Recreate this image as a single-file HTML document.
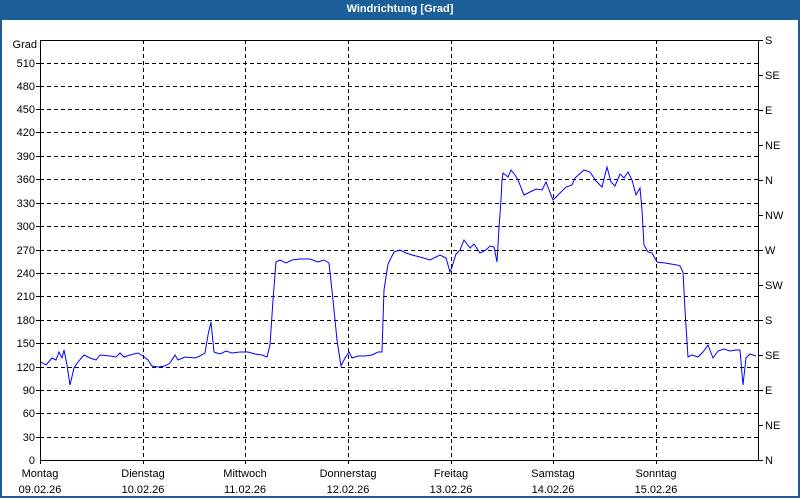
<!DOCTYPE html>
<html><head><meta charset="utf-8"><style>
body{margin:0;width:800px;height:500px;background:#fff;overflow:hidden;font-family:"Liberation Sans",sans-serif;}
#w{position:absolute;left:0;top:0;width:796px;height:496px;border:2px solid #1c5f98;border-top:none;}
#t{position:absolute;left:0;top:0;width:800px;height:20px;background:#1c5f98;color:#fff;font-weight:bold;font-size:11px;text-align:center;line-height:18px;}
svg{position:absolute;left:0;top:0}
text{font-family:"Liberation Sans",sans-serif;font-size:11px;fill:#000}
</style></head><body>
<div id="w"></div>
<div id="t">Windrichtung [Grad]</div>
<svg width="800" height="500">
<g stroke="#000" stroke-dasharray="4,3" stroke-width="1">
<line x1="40" x2="758" y1="63.5" y2="63.5"/><line x1="40" x2="758" y1="86.5" y2="86.5"/><line x1="40" x2="758" y1="109.5" y2="109.5"/><line x1="40" x2="758" y1="132.5" y2="132.5"/><line x1="40" x2="758" y1="156.5" y2="156.5"/><line x1="40" x2="758" y1="179.5" y2="179.5"/><line x1="40" x2="758" y1="203.5" y2="203.5"/><line x1="40" x2="758" y1="226.5" y2="226.5"/><line x1="40" x2="758" y1="250.5" y2="250.5"/><line x1="40" x2="758" y1="273.5" y2="273.5"/><line x1="40" x2="758" y1="296.5" y2="296.5"/><line x1="40" x2="758" y1="320.5" y2="320.5"/><line x1="40" x2="758" y1="343.5" y2="343.5"/><line x1="40" x2="758" y1="367.5" y2="367.5"/><line x1="40" x2="758" y1="390.5" y2="390.5"/><line x1="40" x2="758" y1="413.5" y2="413.5"/><line x1="40" x2="758" y1="437.5" y2="437.5"/>
<line x1="143.5" x2="143.5" y1="40" y2="460"/><line x1="245.5" x2="245.5" y1="40" y2="460"/><line x1="348.5" x2="348.5" y1="40" y2="460"/><line x1="451.5" x2="451.5" y1="40" y2="460"/><line x1="553.5" x2="553.5" y1="40" y2="460"/><line x1="656.5" x2="656.5" y1="40" y2="460"/>
</g>
<rect x="40.5" y="40.5" width="718" height="420" fill="none" stroke="#000"/>
<g stroke="#000"><line x1="36" x2="40" y1="63.5" y2="63.5"/><line x1="36" x2="40" y1="86.5" y2="86.5"/><line x1="36" x2="40" y1="109.5" y2="109.5"/><line x1="36" x2="40" y1="132.5" y2="132.5"/><line x1="36" x2="40" y1="156.5" y2="156.5"/><line x1="36" x2="40" y1="179.5" y2="179.5"/><line x1="36" x2="40" y1="203.5" y2="203.5"/><line x1="36" x2="40" y1="226.5" y2="226.5"/><line x1="36" x2="40" y1="250.5" y2="250.5"/><line x1="36" x2="40" y1="273.5" y2="273.5"/><line x1="36" x2="40" y1="296.5" y2="296.5"/><line x1="36" x2="40" y1="320.5" y2="320.5"/><line x1="36" x2="40" y1="343.5" y2="343.5"/><line x1="36" x2="40" y1="367.5" y2="367.5"/><line x1="36" x2="40" y1="390.5" y2="390.5"/><line x1="36" x2="40" y1="413.5" y2="413.5"/><line x1="36" x2="40" y1="437.5" y2="437.5"/>
<line x1="758" x2="763" y1="40.5" y2="40.5"/><line x1="758" x2="763" y1="75.5" y2="75.5"/><line x1="758" x2="763" y1="110.5" y2="110.5"/><line x1="758" x2="763" y1="145.5" y2="145.5"/><line x1="758" x2="763" y1="180.5" y2="180.5"/><line x1="758" x2="763" y1="215.5" y2="215.5"/><line x1="758" x2="763" y1="250.5" y2="250.5"/><line x1="758" x2="763" y1="285.5" y2="285.5"/><line x1="758" x2="763" y1="320.5" y2="320.5"/><line x1="758" x2="763" y1="355.5" y2="355.5"/><line x1="758" x2="763" y1="390.5" y2="390.5"/><line x1="758" x2="763" y1="425.5" y2="425.5"/><line x1="758" x2="763" y1="460.5" y2="460.5"/>
<line x1="40.5" x2="40.5" y1="460" y2="464"/><line x1="143.5" x2="143.5" y1="460" y2="464"/><line x1="245.5" x2="245.5" y1="460" y2="464"/><line x1="348.5" x2="348.5" y1="460" y2="464"/><line x1="451.5" x2="451.5" y1="460" y2="464"/><line x1="553.5" x2="553.5" y1="460" y2="464"/><line x1="656.5" x2="656.5" y1="460" y2="464"/></g>
<g text-anchor="end"><text x="37" y="48">Grad</text><text x="35" y="67">510</text><text x="35" y="90">480</text><text x="35" y="113">450</text><text x="35" y="136">420</text><text x="35" y="160">390</text><text x="35" y="183">360</text><text x="35" y="207">330</text><text x="35" y="230">300</text><text x="35" y="254">270</text><text x="35" y="277">240</text><text x="35" y="300">210</text><text x="35" y="324">180</text><text x="35" y="347">150</text><text x="35" y="371">120</text><text x="35" y="394">90</text><text x="35" y="417">60</text><text x="35" y="441">30</text><text x="35" y="464">0</text></g>
<g><text x="765" y="44">S</text><text x="765" y="79">SE</text><text x="765" y="114">E</text><text x="765" y="149">NE</text><text x="765" y="184">N</text><text x="765" y="219">NW</text><text x="765" y="254">W</text><text x="765" y="289">SW</text><text x="765" y="324">S</text><text x="765" y="359">SE</text><text x="765" y="394">E</text><text x="765" y="429">NE</text><text x="765" y="464">N</text></g>
<g text-anchor="middle"><text x="40" y="477">Montag</text><text x="40" y="493">09.02.26</text><text x="143" y="477">Dienstag</text><text x="143" y="493">10.02.26</text><text x="245" y="477">Mittwoch</text><text x="245" y="493">11.02.26</text><text x="348" y="477">Donnerstag</text><text x="348" y="493">12.02.26</text><text x="451" y="477">Freitag</text><text x="451" y="493">13.02.26</text><text x="553" y="477">Samstag</text><text x="553" y="493">14.02.26</text><text x="656" y="477">Sonntag</text><text x="656" y="493">15.02.26</text></g>
<polyline fill="none" stroke="#0000ff" stroke-width="1" points="41,362 46,365 52,358 56,360 59,352 62,358 64,350 67,365 70,385 74,368 78,362 84,355 90,358 96,360 100,355 110,356 116,357 120,353 124,357 130,355 138,353 143,356 148,360 152,366 158,367 165,366 170,363 175,355 178,360 185,357 195,358 200,356 205,353 208,335 211,322 214,352 220,354 226,351 232,353 240,352 248,352 255,354 262,355 267,357 270,345 273,300 276,262 280,260 286,263 292,260 300,259 310,259 318,262 324,260 329,263 333,300 337,340 341,366 345,358 349,352 352,358 358,356 365,356 372,355 378,352 382,352 384,290 388,264 394,252 400,250 406,253 412,255 420,257 430,260 440,255 446,258 450,272 452,267 456,254 460,250 464,240 470,248 474,244 480,253 486,250 490,246 494,247 497,262 499,228 501,200 502,180 503,173 508,177 511,170 515,175 518,180 524,195 530,192 536,189 542,190 546,182 553,200 556,197 566,187 572,185 575,178 584,170 590,172 596,181 602,187 607,167 611,182 615,186 620,174 624,178 628,172 632,180 636,195 640,188 642,210 644,245 648,252 652,253 657,262 665,263 677,265 680,266 683,272 685,310 688,357 692,355 698,357 703,352 708,345 713,358 718,351 724,349 730,351 736,350 740,350 743,385 746,358 750,354 756,356"/>
</svg>
</body></html>
